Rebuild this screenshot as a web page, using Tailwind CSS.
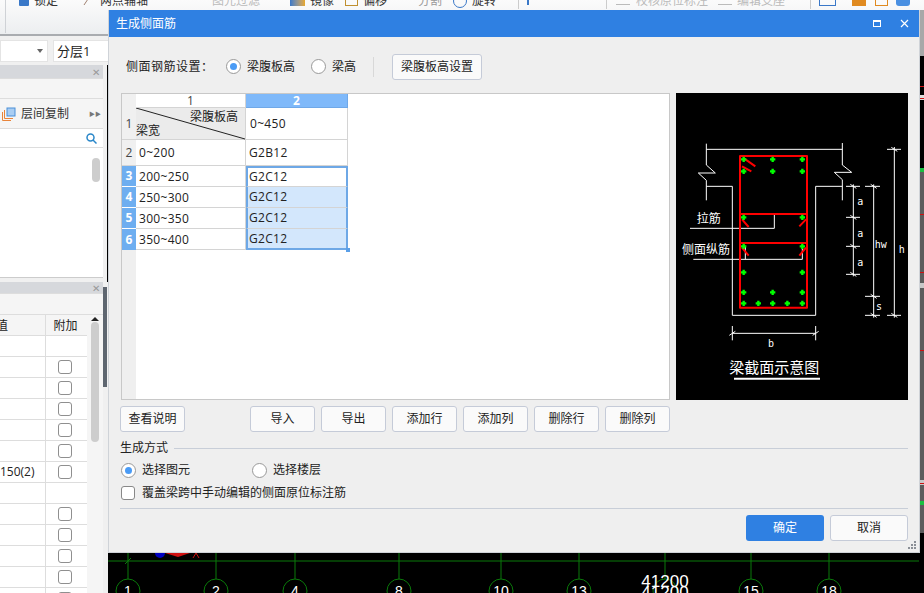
<!DOCTYPE html>
<html lang="zh"><head><meta charset="utf-8">
<script src="https://cdn.jsdelivr.net/npm/@tailwindcss/browser@4"></script>
<title>生成侧面筋</title></head>
<body class="m-0">
<div class="relative w-[924px] h-[593px] overflow-hidden bg-black text-[12px] leading-[16px] text-[#222] font-['Open_Sans','Noto_Sans_CJK_SC',sans-serif]">
  <!-- application behind the dialog -->
  <div class="flex flex-col h-full">
    <div class="h-[36px] shrink-0 bg-gradient-to-b from-[#fbfbfb] to-[#eceef0] border-b-2 border-[#a9acb0] overflow-hidden relative">
      <span class="absolute left-[5px] top-0 h-[33px] w-px bg-[#cfd2d6]"></span>
      <div class="flex items-center h-[16px] -mt-[7px] text-[#333]">
        <span class="w-[10px] h-[9px] ml-[19px] bg-[#3a78c8] rounded-[1px]"></span><span class="ml-[5px] w-[48px]">锁定</span>
        <svg class="mr-[8px]" width="10" height="10" viewBox="0 0 10 10" fill="none" stroke="#a08070"><path d="M0 2H10M2 9L8 0"/></svg><span class="w-[112px]">两点辅轴</span>
        <span class="text-[#bbb] w-[78px]">图元过滤</span>
        <span class="w-[15px] h-[9px] mr-[5px] bg-gradient-to-r from-[#3a78c8] to-[#e8a820]"></span><span class="w-[35px]">镜像</span>
        <span class="w-[13px] h-[9px] border border-[#c09030] mr-[5px]"></span><span class="w-[37px]">偏移</span>
        <span class="text-[#999] w-[53px] pl-[18px]">分割</span>
        <span class="w-[14px] h-[14px] rounded-full border border-[#3a78c8] mr-[5px] shrink-0"></span><span class="w-[46px]">旋转</span>
        <span class="w-px h-[16px] bg-[#ccc] mr-[8px]"></span><span class="w-[2px] h-[8px] bg-[#3a78c8] mr-[77px]"></span>
        <span class="w-px h-[16px] bg-[#ccc] mr-[9px]"></span>
        <span class="w-[14px] h-[8px] border-b border-[#bbb] mr-[6px]"></span>
        <span class="text-[#bbb] w-[82px] whitespace-nowrap">校核原位标注</span>
        <span class="w-[14px] h-[8px] border-y border-[#bbb] mr-[5px]"></span>
        <span class="text-[#bbb] w-[73px]">编辑支座</span>
        <span class="w-px h-[16px] bg-[#ccc]"></span>
      </div>
    </div>
    <div class="h-[29px] shrink-0 bg-[#f0f0f0] flex items-center pt-[1px]">
      <div class="w-[48px] h-[22px] bg-white border border-[#e4e4e4] flex items-center justify-end pr-[4px]"><span class="border-x-[3px] border-x-transparent border-t-[4px] border-t-[#666]"></span></div>
      <div class="ml-[5px] w-[60px] h-[22px] bg-white border border-[#e4e4e4] flex items-center pl-[3px] text-[13px]">分层1</div>
    </div>
    <div class="flex-1 flex min-h-0">
      <div class="w-[108px] shrink-0 relative flex flex-col bg-[#f0f0f0] pr-[5px]">
        <span class="absolute right-0 top-0 h-[217px] w-px bg-black"></span>
        <span class="absolute right-[1px] top-[222px] h-[100px] w-[4px] bg-[#5e6670]"></span>
        <div class="h-[13px] bg-[#d6d8dc] flex items-center justify-end pr-[3px] text-[10px] text-[#999]">✕</div>
        <div class="h-[21px] bg-[#f5f5f5] border-y border-[#ddd]"></div>
        <div class="h-[30px] bg-[#f5f5f5] flex items-center border-b border-[#ddd]">
          <svg class="ml-[2px]" width="14" height="14" viewBox="0 0 14 14" fill="none"><path d="M.5 5V13.500H9M2.500 3V11.500H11" stroke="#e8843a"/><rect x="5" y="1" width="8" height="8" fill="#a9cdf2" stroke="#4a8fd8"/></svg>
          <span class="ml-[5px] text-[#333]">层间复制</span>
          <span class="ml-auto mr-[2px] text-[6px] text-[#777]">▶▶</span>
        </div>
        <div class="h-[19px] bg-white border-b border-[#ddd] flex justify-end items-center pr-[6px]">
          <svg width="11" height="11" viewBox="0 0 11 11" fill="none" stroke="#2a87c9" stroke-width="1.500"><circle cx="4.500" cy="4.500" r="3.500"/><path d="M7 7l3.500 3.500"/></svg>
        </div>
        <div class="h-[129px] bg-white relative"><span class="absolute right-[3px] top-[10px] w-[8px] h-[24px] bg-[#cdcdcd] rounded-[4px]"></span></div>
        <div class="h-[5px] bg-[#f0f0f0] border-t border-[#ccc]"></div>
        <div class="h-[11px] bg-[#d6d8dc] flex items-center justify-end pr-[3px] text-[10px] text-[#999]">✕</div>
        <div class="h-[22px] bg-[#f5f5f5] border-y border-[#ddd]"></div>
        <div class="flex-1 flex bg-white min-h-0">
          <div class="w-[87px] flex flex-col overflow-hidden">
            <div class="h-[21px] flex shrink-0 bg-[#f5f5f5] border-b border-[#ddd]"><span class="w-[45px] -ml-[4px] mr-[4px] pt-[3px]">值</span><span class="w-[42px] border-l border-[#ddd] text-center pt-[3px] pr-[2px]">附加</span></div>
            <div class="h-[21px] flex shrink-0 border-b border-[#ddd]"><span class="w-[45px]"></span><span class="w-[42px] border-l border-[#ddd]"></span></div>
            <div class="h-[21px] flex shrink-0 border-b border-[#ddd]"><span class="w-[45px]"></span><span class="w-[42px] border-l border-[#ddd] flex items-center pl-[12px]"><i class="block w-[14px] h-[14px] border border-[#8f8f8f] rounded-[3px]"></i></span></div>
            <div class="h-[21px] flex shrink-0 border-b border-[#ddd]"><span class="w-[45px]"></span><span class="w-[42px] border-l border-[#ddd] flex items-center pl-[12px]"><i class="block w-[14px] h-[14px] border border-[#8f8f8f] rounded-[3px]"></i></span></div>
            <div class="h-[21px] flex shrink-0 border-b border-[#ddd]"><span class="w-[45px]"></span><span class="w-[42px] border-l border-[#ddd] flex items-center pl-[12px]"><i class="block w-[14px] h-[14px] border border-[#8f8f8f] rounded-[3px]"></i></span></div>
            <div class="h-[21px] flex shrink-0 border-b border-[#ddd]"><span class="w-[45px]"></span><span class="w-[42px] border-l border-[#ddd] flex items-center pl-[12px]"><i class="block w-[14px] h-[14px] border border-[#8f8f8f] rounded-[3px]"></i></span></div>
            <div class="h-[21px] flex shrink-0 border-b border-[#ddd]"><span class="w-[45px]"></span><span class="w-[42px] border-l border-[#ddd] flex items-center pl-[12px]"><i class="block w-[14px] h-[14px] border border-[#8f8f8f] rounded-[3px]"></i></span></div>
            <div class="h-[21px] flex shrink-0 border-b border-[#ddd]"><span class="w-[45px] pt-[2px]">150(2)</span><span class="w-[42px] border-l border-[#ddd] flex items-center pl-[12px]"><i class="block w-[14px] h-[14px] border border-[#8f8f8f] rounded-[3px]"></i></span></div>
            <div class="h-[21px] flex shrink-0 border-b border-[#ddd]"><span class="w-[45px]"></span><span class="w-[42px] border-l border-[#ddd]"></span></div>
            <div class="h-[21px] flex shrink-0 border-b border-[#ddd]"><span class="w-[45px]"></span><span class="w-[42px] border-l border-[#ddd] flex items-center pl-[12px]"><i class="block w-[14px] h-[14px] border border-[#8f8f8f] rounded-[3px]"></i></span></div>
            <div class="h-[21px] flex shrink-0 border-b border-[#ddd]"><span class="w-[45px]"></span><span class="w-[42px] border-l border-[#ddd] flex items-center pl-[12px]"><i class="block w-[14px] h-[14px] border border-[#8f8f8f] rounded-[3px]"></i></span></div>
            <div class="h-[21px] flex shrink-0 border-b border-[#ddd]"><span class="w-[45px]"></span><span class="w-[42px] border-l border-[#ddd] flex items-center pl-[12px]"><i class="block w-[14px] h-[14px] border border-[#8f8f8f] rounded-[3px]"></i></span></div>
            <div class="h-[21px] flex shrink-0 border-b border-[#ddd]"><span class="w-[45px]"></span><span class="w-[42px] border-l border-[#ddd] flex items-center pl-[12px]"><i class="block w-[14px] h-[14px] border border-[#8f8f8f] rounded-[3px]"></i></span></div>
            <div class="h-[21px] flex shrink-0"><span class="w-[45px]"></span><span class="w-[42px] border-l border-[#ddd] flex items-center pl-[12px]"><i class="block w-[14px] h-[14px] border border-[#8f8f8f] rounded-[3px]"></i></span></div>
          </div>
          <div class="w-[16px] bg-[#f5f5f5] flex flex-col items-center"><span class="border-x-[4px] border-x-transparent border-b-[4px] border-b-[#222] mt-[2px]"></span><span class="mt-[1px] w-[8px] h-[120px] bg-[#cdcdcd] rounded-[4px]"></span></div>
        </div>
      </div>
      <div class="flex-1 relative">
        <svg class="absolute inset-0" width="816" height="528" viewBox="108 65 816 528" fill="none">
          <path d="M108 561H919M128 553V579M216 553V579M295 553V579M399 553V579M501 553V579M579 553V579M665 553V579M751 553V579M829 553V579" stroke="#0a7a0a"/>
          <path d="M125 564l6-6" stroke="#0a7a0a"/>
          <g stroke="#0a7a0a"><circle cx="128" cy="591" r="12"/><circle cx="216" cy="591" r="12"/><circle cx="295" cy="591" r="12"/><circle cx="399" cy="591" r="12"/><circle cx="501" cy="591" r="12"/><circle cx="579" cy="591" r="12"/><circle cx="665" cy="591" r="12"/><circle cx="751" cy="591" r="12"/><circle cx="829" cy="591" r="12"/></g>
          <circle cx="160" cy="553" r="5" fill="#0000c0"/>
          <path d="M165 553H190L178 557z" fill="#d01010"/><path d="M193 558l3-5 3 5" stroke="#d01010"/>
          <g fill="#fff" font-family="'Liberation Sans',sans-serif" font-size="14" text-anchor="middle">
            <text x="128" y="596">1</text><text x="216" y="596">2</text><text x="295" y="596">4</text><text x="399" y="596">8</text><text x="501" y="596">10</text><text x="579" y="596">13</text><text x="751" y="596">15</text><text x="829" y="596">18</text>
            <text x="665" y="587" font-size="17">41200</text><text x="665" y="598" font-size="17">41200</text>
          </g>
        </svg>
      </div>
    </div>
  </div>
  <!-- right edge of the drawing canvas -->
  <svg class="absolute right-0 top-0" width="4" height="593" viewBox="920 0 4 593">
    <path d="M920 10h4v46h-4z" fill="#a8a8a8"/><path d="M920 56h4v39h-4z" fill="#000"/><path d="M920 95h4v5h-4z" fill="#ddd"/><path d="M920 100h4v68h-4z" fill="#000"/>
    <path d="M920 172h4v361h-4z" fill="#5c5c5c"/><path d="M920 283h4v5h-4zM920 480h4v5h-4z" fill="#c8c8c8"/>
    <path d="M920 168h4v4h-4zM920 501h4v4h-4z" fill="#19c040"/>
    <path d="M920 86h4v1h-4zM920 98h4v1h-4zM920 214h4v1h-4zM920 272h4v1h-4zM920 350h4v1h-4zM920 483h4v1h-4z" fill="#d01010"/>
  </svg>
  <!-- right toolbar icons -->
  <div class="absolute left-[819px] top-0 flex">
    <span class="w-[17px] h-[6px] border border-t-0 border-[#3a78c8]"></span><span class="ml-[16px] w-[14px] h-[6px] bg-[#e08a20]"></span><span class="ml-[9px] w-[13px] h-[6px] border border-t-0 border-[#e08a20]"></span><span class="ml-[8px] w-[14px] h-[6px] bg-[#4a90e2] rounded-b-[3px]"></span>
  </div>
  <!-- dialog -->
  <div class="absolute left-[108px] top-[10px] w-[812px] h-[543px] bg-[#efefef] border-l border-b border-r border-[#cfd3d8] flex flex-col">
    <div class="h-[27px] shrink-0 bg-[#2f80e2] text-white flex items-center pl-[7px] pr-[10px] text-[12px]">
      <span>生成侧面筋</span>
      <span class="ml-auto w-[8px] h-[7px] border border-white border-t-2"></span>
      <svg class="ml-[19px]" width="9" height="9" viewBox="0 0 9 9" stroke="#fff" stroke-width="1.200"><path d="M1 1l7 7M8 1l-7 7"/></svg>
    </div>
    <div class="flex-1 flex flex-col pl-[12px] pr-[11px] min-h-0">
      <div class="h-[56px] shrink-0 flex items-center pl-[5px] pt-[3px]">
        <span class="w-[100px] shrink-0 whitespace-nowrap tracking-[0.5px]">侧面钢筋设置：</span>
        <span class="w-[15px] h-[15px] rounded-full bg-white border border-[#999] flex items-center justify-center"><i class="block w-[7px] h-[7px] rounded-full bg-[#4a9bf5]"></i></span>
        <span class="ml-[6px]">梁腹板高</span>
        <span class="ml-[16px] w-[15px] h-[15px] rounded-full bg-white border border-[#999]"></span>
        <span class="ml-[6px]">梁高</span>
        <span class="ml-[17px] w-px h-[20px] bg-[#d8d8d8]"></span>
        <button class="ml-[18px] w-[90px] h-[26px] rounded-[3px] bg-[#fafafa] border border-[#c5cbd8] text-[12px]">梁腹板高设置</button>
      </div>
      <div class="h-[307px] shrink-0 flex gap-[6px]">
        <div class="w-[549px] bg-white border border-[#c8c8c8] relative">
          <div class="grid grid-cols-[14px_110px_102px] grid-rows-[14px_32px_26px_21px_21px_21px_21px] w-[226px] bg-[#efefef] tracking-[0.3px]">
            <div class="bg-[#f0f0f0]"></div>
            <div class="flex items-center justify-center bg-white border-r border-b border-[#d4d4d4] leading-none text-[#444]">1</div>
            <div class="flex items-center justify-center bg-[#7fb9fa] border-r border-b border-[#6fa8e8] text-white font-bold leading-none">2</div>
            <div class="flex items-center justify-center bg-[#f0f0f0] border-b border-[#d4d4d4] text-[#444]">1</div>
            <div class="relative bg-[#ebebeb] border-r border-b border-[#d4d4d4] tracking-normal">
              <svg class="absolute inset-0" width="110" height="32" fill="none"><path d="M0 0L109 31" stroke="#222"/></svg>
              <span class="absolute right-[7px] top-[1px]">梁腹板高</span><span class="absolute left-0 bottom-0">梁宽</span>
            </div>
            <div class="bg-white border-r border-b border-[#d4d4d4] flex items-center pl-[4px]">0~450</div>
            <div class="flex items-center justify-center bg-[#f0f0f0] border-b border-[#d4d4d4] text-[#444]">2</div>
            <div class="bg-white border-r border-b border-[#d4d4d4] flex items-center pl-[3px]">0~200</div>
            <div class="bg-white border-r border-b border-[#d4d4d4] flex items-center pl-[3px]">G2B12</div>
            <div class="flex items-center justify-center bg-[#6eaef0] border-b border-[#fff] text-white font-bold">3</div>
            <div class="bg-white border-r border-b border-[#d4d4d4] flex items-center pl-[3px] pt-[1px]">200~250</div>
            <div class="bg-white border-2 border-b border-[#6ea8e6] border-b-[#d4d4d4] flex items-center pl-[1px]">G2C12</div>
            <div class="flex items-center justify-center bg-[#6eaef0] border-b border-[#fff] text-white font-bold">4</div>
            <div class="bg-white border-r border-b border-[#d4d4d4] flex items-center pl-[3px] pt-[1px]">250~300</div>
            <div class="bg-[#d3e7fc] border-x-2 border-b border-x-[#6ea8e6] border-b-[#d4d4d4] flex items-center pl-[1px]">G2C12</div>
            <div class="flex items-center justify-center bg-[#6eaef0] border-b border-[#fff] text-white font-bold">5</div>
            <div class="bg-white border-r border-b border-[#d4d4d4] flex items-center pl-[3px] pt-[1px]">300~350</div>
            <div class="bg-[#d3e7fc] border-x-2 border-b border-x-[#6ea8e6] border-b-[#d4d4d4] flex items-center pl-[1px]">G2C12</div>
            <div class="flex items-center justify-center bg-[#6eaef0] text-white font-bold">6</div>
            <div class="bg-white border-r border-b border-[#d4d4d4] flex items-center pl-[3px] pt-[1px]">350~400</div>
            <div class="relative bg-[#d3e7fc] border-x-2 border-b-2 border-[#6ea8e6] flex items-center pl-[1px]">G2C12<span class="absolute -right-[4px] -bottom-[4px] w-[4px] h-[4px] bg-[#5a9fe8]"></span></div>
          </div>
          <div class="absolute left-0 top-[156px] bottom-0 w-[14px] bg-[#efefef]"></div>
        </div>
        <svg class="bg-black shrink-0" width="232" height="307" viewBox="18 6 696 921" fill="none">
          <g stroke="#fff" stroke-width="3">
            <path d="M109 158V222L136 246H85L109 268V328M109 175H517M517 156V222L545 244H493L517 266V328M109 286H187V673H437V286H517"/>
            <path d="M60 412H313V369M70 505H397V466M226 505V466"/>
            <path d="M528 286H570M528 379H570M528 466H570M528 550H570M550 280V556M541 280l18 12M541 373l18 12M541 460l18 12M541 544l18 12"/>
            <path d="M585 286H630M585 616H630M585 673H630M611 280V680M602 280l18 12M602 610l18 12M602 667l18 12"/>
            <path d="M651 175H693M651 673H693M673 168V680M664 169l18 12M664 667l18 12"/>
            <path d="M187 727H437M187 705V748M437 705V748M178 733l18-12M428 733l18-12"/>
          </g>
          <path d="M192 863H450" stroke="#fff" stroke-width="6"/>
          <g stroke="#f00">
            <path d="M210 195H411V650H210ZM210 369H411M210 456H411" stroke-width="6" stroke-linejoin="round"/>
            <path d="M222 202L256 226M216 226L244 241M216 385L236 408M408 385L388 406M216 470L236 494M408 470L388 494" stroke-width="6"/>
          </g>
          <g stroke="#0f0" stroke-width="7">
            <path d="M221 197v16M213 205h16M308 197v16M300 205h16M397 197v16M389 205h16M221 233v16M213 241h16M308 233v16M300 241h16M397 233v16M389 241h16M221 371v16M213 379h16M397 371v16M389 379h16M221 458v16M213 466h16M397 458v16M389 466h16M221 536v16M213 544h16M397 536v16M389 544h16M221 596v16M213 604h16M308 596v16M300 604h16M397 596v16M389 604h16M221 629v16M213 637h16M265 629v16M257 637h16M308 629v16M300 637h16M352 629v16M344 637h16M397 629v16M389 637h16"/>
          </g>
          <g fill="#fff" font-family="'Noto Sans CJK SC',sans-serif">
            <text x="80" y="396" font-size="36">拉筋</text>
            <text x="36" y="490" font-size="36">侧面纵筋</text>
            <text x="178" y="845" font-size="45">梁截面示意图</text>
            <g font-family="'DejaVu Sans Mono','Liberation Mono',monospace" font-size="30">
              <text x="562" y="343">a</text><text x="562" y="437">a</text><text x="562" y="524">a</text><text x="618" y="656">s</text><text x="614" y="470">hw</text><text x="686" y="486">h</text><text x="294" y="767">b</text>
            </g>
          </g>
        </svg>
      </div>
      <div class="h-[38px] shrink-0 flex items-center gap-[6px] -ml-[1px]">
        <button class="w-[65px] h-[26px] mr-[59px] rounded-[3px] bg-[#fafafa] border border-[#c5cbd8] text-[12px]">查看说明</button>
        <button class="w-[65px] h-[26px] rounded-[3px] bg-[#fafafa] border border-[#c5cbd8] text-[12px]">导入</button>
        <button class="w-[65px] h-[26px] rounded-[3px] bg-[#fafafa] border border-[#c5cbd8] text-[12px]">导出</button>
        <button class="w-[65px] h-[26px] rounded-[3px] bg-[#fafafa] border border-[#c5cbd8] text-[12px]">添加行</button>
        <button class="w-[65px] h-[26px] rounded-[3px] bg-[#fafafa] border border-[#c5cbd8] text-[12px]">添加列</button>
        <button class="w-[65px] h-[26px] rounded-[3px] bg-[#fafafa] border border-[#c5cbd8] text-[12px]">删除行</button>
        <button class="w-[65px] h-[26px] rounded-[3px] bg-[#fafafa] border border-[#c5cbd8] text-[12px]">删除列</button>
      </div>
      <div class="flex items-center gap-[6px] h-[20px] shrink-0 -ml-[1px]">
        <span>生成方式</span><span class="flex-1 h-px bg-[#c8ced8]"></span>
      </div>
      <div class="flex items-center h-[24px] shrink-0">
        <span class="w-[15px] h-[15px] rounded-full bg-white border border-[#999] flex items-center justify-center"><i class="block w-[7px] h-[7px] rounded-full bg-[#4a9bf5]"></i></span>
        <span class="ml-[6px] w-[110px]">选择图元</span>
        <span class="w-[15px] h-[15px] rounded-full bg-white border border-[#999]"></span>
        <span class="ml-[6px]">选择楼层</span>
      </div>
      <div class="flex items-center h-[22px] shrink-0">
        <span class="w-[14px] h-[14px] rounded-[3px] bg-white border border-[#888]"></span>
        <span class="ml-[7px]">覆盖梁跨中手动编辑的侧面原位标注筋</span>
      </div>
      <div class="h-px shrink-0 mt-[4px] -ml-[1px] bg-[#c8ced8]"></div>
      <div class="flex justify-end gap-[6px] mt-[6px]">
        <button class="w-[78px] h-[26px] rounded-[3px] bg-[#2f80e2] text-white text-[12px]">确定</button>
        <button class="w-[78px] h-[26px] rounded-[3px] bg-[#fafafa] border border-[#c5cbd8] text-[12px]">取消</button>
      </div>
    </div>
    <svg class="absolute right-[3px] bottom-[3px]" width="8" height="8" fill="#8a8f96"><path d="M6 0h2v2H6zM3 3h2v2H3zM6 3h2v2H6zM0 6h2v2H0zM3 6h2v2H3zM6 6h2v2H6z"/></svg>
  </div>
</div>
</body></html>
